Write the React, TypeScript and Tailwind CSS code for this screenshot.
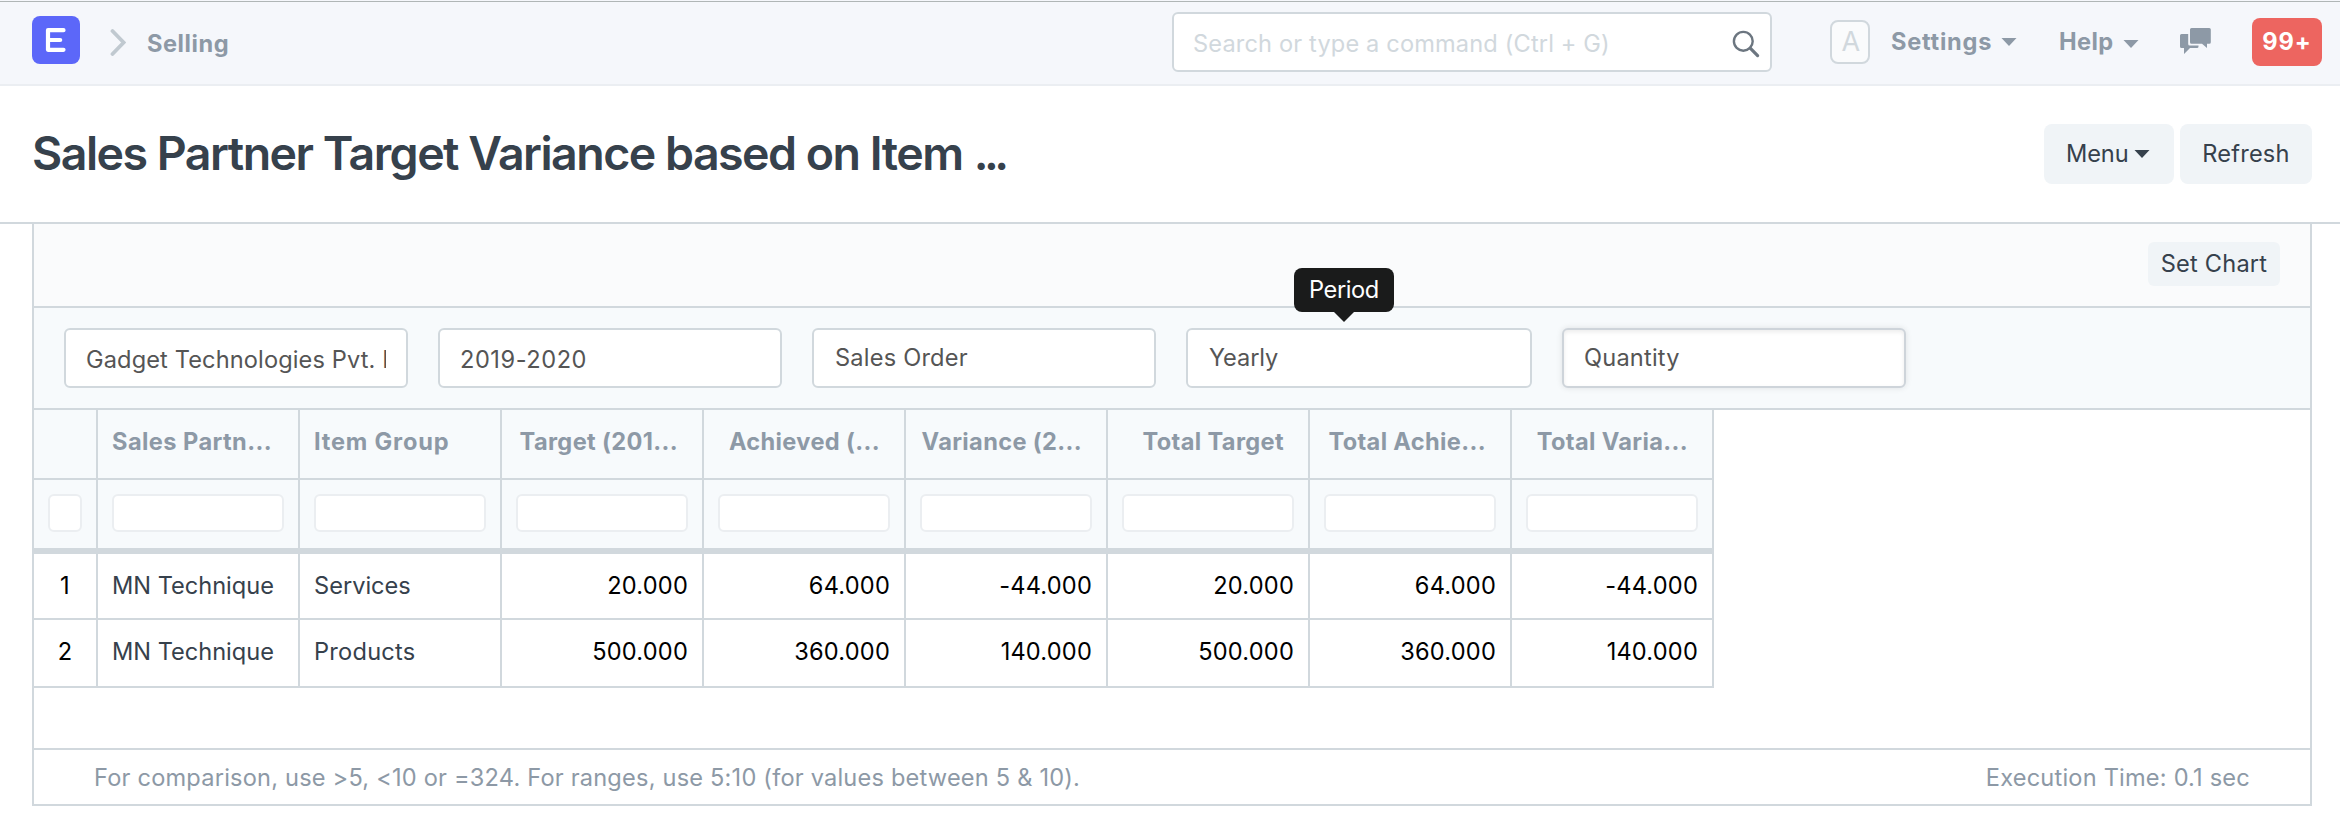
const columns = [
  "Target (201...",
  "Achieved (...",
  "Variance (2...",
  "Total Target",
  "Total Achie...",
  "Total Varia...",
];

const rows = [
  { partner: "MN Technique", group: "Services", values: ["20.000", "64.000", "-44.000", "20.000", "64.000", "-44.000"] },
  { partner: "MN Technique", group: "Products", values: ["500.000", "360.000", "140.000", "500.000", "360.000", "140.000"] },
];

function Caret({ className = "" }: { className?: string }) {
  return (
    <svg className={`h-2 w-4 shrink-0 fill-current ${className}`} viewBox="0 0 16 8">
      <path d="M0.500 0h15L8 8z" />
    </svg>
  );
}

function Navbar() {
  return (
    <header className="flex h-[86px] items-start border-b-2 border-[#ebeef2] bg-[#f5f7fb]">
      <svg className="mt-4 ml-8 h-12 w-12" viewBox="0 0 48 48">
        <rect width="48" height="48" rx="8" fill="#5c67f9" />
        <path d="M31.5 14.2H16v19.6h15.5M16 24h12.2" fill="none" stroke="#fff" strokeWidth="4.2" strokeLinecap="round" strokeLinejoin="round" />
      </svg>
      <svg className="mt-7 ml-[30px] h-7 w-4" viewBox="0 0 16 28" fill="none" stroke="#c0c9d0" strokeWidth="3.8" strokeLinecap="round">
        <path d="M2.500 3l11.200 11.500L2.500 26" />
      </svg>
      <span className="mt-7 ml-[21px] leading-8 font-bold tracking-[0.55px]">Selling</span>
      <div className="mt-3 ml-auto flex h-[60px] w-[600px] items-start justify-between rounded-md border-2 border-[#d1d8dd] bg-white pt-3.5 pr-2.5 pl-[19px] text-[#d1d8dd]">
        <span className="leading-8 tracking-[0.15px]">Search or type a command (Ctrl + G)</span>
        <svg className="mt-0.5 h-7 w-7" viewBox="0 0 28 28" fill="none" stroke="#6c7680" strokeWidth="2.4">
          <circle cx="11.3" cy="11.3" r="9.4" />
          <path d="M18.2 18.2l7.4 7.4" strokeWidth="3.2" strokeLinecap="round" />
        </svg>
      </div>
      <div className="mt-5 ml-[58px] flex h-11 w-10 items-center justify-center rounded-lg border-2 border-[#d1d8dd] bg-[#fafbfc] pl-0.5 text-[27px] leading-10 font-normal text-[#d1d8dd]">A</div>
      <div className="mt-[26px] ml-[21px] flex w-[126px] items-start justify-between leading-8 font-bold">
        <span className="tracking-[0.75px]">Settings</span>
        <Caret className="mt-3" />
      </div>
      <div className="mt-[26px] ml-[42px] flex w-20 items-start justify-between leading-8 font-bold">
        <span className="tracking-[0.4px]">Help</span>
        <Caret className="mt-3.5" />
      </div>
      <svg className="mt-7 ml-[41px] h-[26px] w-[31px] fill-current" viewBox="0 0 31 26">
        <path d="M11.5 0h17.8a1.5 1.5 0 0 1 1.5 1.5v12.7a1.5 1.5 0 0 1-1.5 1.5H27V20l-5-4.300H11.500a1.500 1.500 0 0 1-1.500-1.500V1.500A1.500 1.500 0 0 1 11.500 0z" />
        <path d="M8.200 6H1.500A1.500 1.500 0 0 0 0 7.500v11A1.500 1.500 0 0 0 1.500 20H4v6l6-6h7a1.500 1.500 0 0 0 1.500-1.500v-1H9.700a1.500 1.500 0 0 1-1.500-1.500z" />
      </svg>
      <div className="mt-[18px] mr-[18px] ml-[41px] h-12 w-[70px] rounded-lg bg-[#ed6560] pt-2 text-center leading-8 font-bold tracking-[0.9px] text-white">99+</div>
    </header>
  );
}

function TextField({ value, className }: { value: string; className: string }) {
  return (
    <div className="h-[60px] w-[344px] rounded-md border-2 border-[#d1d8dd] bg-white px-5 pt-3.5 leading-8">
      <div className={`overflow-hidden whitespace-nowrap ${className}`}>{value}</div>
    </div>
  );
}

function Report() {
  const head = "h-[70px] border-r-2 border-b-2 border-[#d1d8dd] pt-4 leading-8 font-bold whitespace-nowrap text-[#8d99a6]";
  const filter = "h-[74px] border-r-2 border-b-[6px] border-[#d1d8dd] px-3.5 pt-3.5";
  const cell = "border-r-2 border-b-2 border-[#d1d8dd] px-3.5 pt-4 leading-8";
  const grid = "grid w-[1680px] grid-cols-[64px_repeat(8,202px)]";
  return (
    <main className="mx-8 h-[582px] w-[2280px] border-x-2 border-b-2 border-[#d1d8dd]">
      <div className="flex h-[84px] justify-end border-b-2 border-[#d1d8dd] bg-[#fafbfc] pt-[18px] pr-[30px]">
        <button className="h-11 w-[132px] rounded-md bg-[#f0f4f7] leading-8 text-[#36414c]">Set Chart</button>
      </div>
      <div className="flex h-[102px] gap-[30px] border-b-2 border-[#d1d8dd] bg-[#f7fafc] pt-5 pl-[30px] text-[#555]">
        <TextField value="Gadget Technologies Pvt. Ltd." className="tracking-[0.12px]" />
        <TextField value="2019-2020" className="tracking-[0.55px]" />
        <div className="h-[60px] w-[344px] rounded-md border-2 border-[#d1d8dd] bg-white px-[21px] pt-3 leading-8">Sales Order</div>
        <div className="relative h-[60px] w-[346px] rounded-md border-2 border-[#d1d8dd] bg-white px-[21px] pt-3 leading-8 tracking-[-0.1px]">
          Yearly
          <div className="absolute -top-[62px] left-[106px] h-11 w-[100px] rounded-lg bg-[#1a1b1b] pt-1.5 text-center leading-8 tracking-[-0.4px] text-white">
            Period
            <svg className="absolute top-11 left-10 h-2.5 w-5 fill-[#1a1b1b]" viewBox="0 0 20 10">
              <path d="M0 0h20L10 10z" />
            </svg>
          </div>
        </div>
        <div className="h-[60px] w-[344px] rounded-md border-2 border-[#ced4da] bg-white px-5 pt-3 leading-8 shadow-[0_0_6px_rgba(0,0,0,0.1),inset_0_2px_4px_rgba(0,0,0,0.08)]">Quantity</div>
      </div>
      <div className={`${grid} bg-[#f7fafc]`}>
        <div className={head} />
        <div className={`${head} pl-3.5 tracking-[0.43px]`}>Sales Partn...</div>
        <div className={`${head} pl-3.5 tracking-[0.8px]`}>Item Group</div>
        {columns.map((c) => (
          <div key={c} className={`${head} pr-6 text-right tracking-[0.36px]`}>{c}</div>
        ))}
        {Array.from({ length: 9 }, (_, i) => (
          <div key={i} className={filter}>
            <div className="h-[38px] rounded-md border-2 border-[#ebeef1] bg-white" />
          </div>
        ))}
      </div>
      {rows.map((r, i) => (
        <div key={i} className={`${grid} ${i === 0 ? "h-[66px]" : "h-[68px]"} text-black`}>
          <div className={`${cell} text-center`}>{i + 1}</div>
          <div className={`${cell} tracking-[-0.02px] text-[#36414c]`}>{r.partner}</div>
          <div className={`${cell} text-[#36414c] ${i === 0 ? "tracking-[0px]" : "tracking-[0.25px]"}`}>{r.group}</div>
          {r.values.map((v, j) => (
            <div key={j} className={`${cell} text-right`}>{v}</div>
          ))}
        </div>
      ))}
      <div className="mt-[60px] flex h-14 justify-between border-t-2 border-[#d1d8dd] px-[60px] pt-3 leading-8">
        <span>For comparison, use &gt;5, &lt;10 or =324. For ranges, use 5:10 (for values between 5 &amp; 10).</span>
        <span>Execution Time: 0.1 sec</span>
      </div>
    </main>
  );
}

export default function App() {
  return (
    <div className="h-[818px] w-[2340px] overflow-hidden bg-white font-['Inter',sans-serif] text-[23.6px] tracking-[0.2px] text-[#8d99a6]">
      <div className="relative -mb-0.5 h-0.5 border-b border-[#b0b6b6]" />
      <Navbar />
      <div className="flex h-[138px] items-start justify-between border-b-2 border-[#d1d8dd] pr-7 pl-8">
        <h1 className="mt-[37px] text-[46.5px] leading-[60px] font-[570] tracking-[-1.52px] text-[#36414c]">
          Sales Partner Target Variance based on Item <span className="ml-px tracking-[-4.5px]">...</span>
        </h1>
        <div className="mt-[38px] flex gap-1.5 text-[#36414c]">
          <button className="flex h-[60px] w-[130px] items-center justify-between rounded-lg bg-[#f0f4f7] pr-6 pl-[22px] tracking-[-0.1px]">
            Menu
            <Caret />
          </button>
          <button className="h-[60px] w-[132px] rounded-lg bg-[#f0f4f7]">Refresh</button>
        </div>
      </div>
      <Report />
    </div>
  );
}
